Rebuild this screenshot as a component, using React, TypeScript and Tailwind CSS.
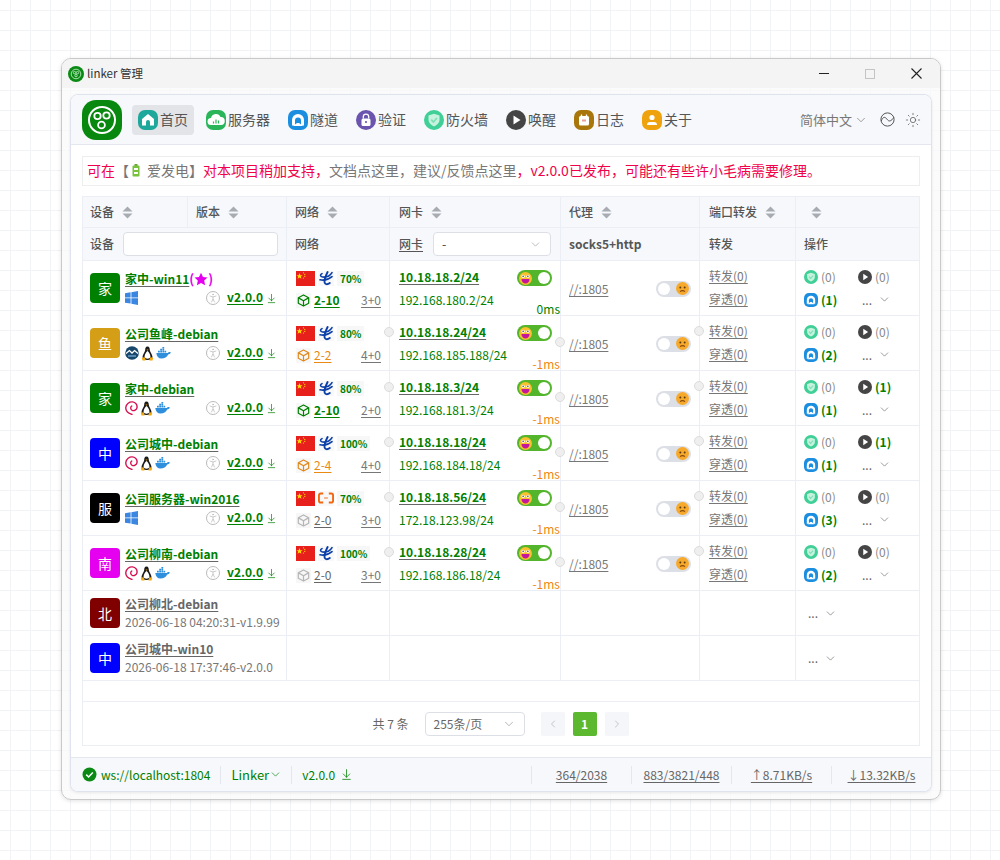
import type { ReactNode } from "react";
import { ArrowDownToLine, ChevronDown, ChevronLeft, ChevronRight, PersonStanding, Sun } from "lucide-react";

const gridCols = "grid grid-cols-[204px_103px_171px_139px_96px_125px]";
const cellBorder = "border-r border-[#ebeef5] last:border-r-0";

function Squircle({ color, size = 20, children }: { color: string; size?: number; children: ReactNode }) {
  return (
    <svg width={size} height={size} viewBox="0 0 20 20" className="shrink-0">
      <rect width="20" height="20" rx="7" fill={color} />
      {children}
    </svg>
  );
}

const HomeIcon = () => (
  <Squircle color="#1ea89b">
    <path d="M10 4 L16 9 V15.5 H12 V12 A2 2 0 0 0 8 12 V15.5 H4 V9 Z" fill="#fff" />
  </Squircle>
);
const ServerIcon = () => (
  <Squircle color="#2bb55a">
    <path d="M5 15 a3.5 3.5 0 0 1 0-7 a5 5 0 0 1 9.5-1 a4 4 0 0 1 .5 8 Z" fill="#fff" />
    <path d="M7.5 13.5v-2M10 13.5v-4M12.5 13.5v-3" stroke="#2bb55a" strokeWidth="1.2" />
  </Squircle>
);
const TunnelIcon = ({ size = 20 }: { size?: number }) => (
  <Squircle color="#1b8ee0" size={size}>
    <path d="M4 15.5 V10 a6 6 0 0 1 12 0 V15.5 Z" fill="#fff" />
    <path d="M7 15.5 V10.5 a3 3 0 0 1 6 0 V15.5 Z" fill="#1b8ee0" />
    <path d="M9 13 L5 16 H15 L11 13 Z" fill="#fff" />
  </Squircle>
);
const LockIcon = () => (
  <svg width="20" height="20" viewBox="0 0 20 20" className="shrink-0">
    <circle cx="10" cy="10" r="10" fill="#6a54ad" />
    <rect x="5.5" y="8.5" width="9" height="7.5" rx="1.5" fill="#fff" />
    <path d="M7.3 8.5 V6.8 a2.7 2.7 0 0 1 5.4 0 V8.5" fill="none" stroke="#fff" strokeWidth="1.3" />
    <circle cx="10" cy="12" r="1.1" fill="#6a54ad" />
  </svg>
);
const ShieldIcon = ({ size = 20 }: { size?: number }) => (
  <svg width={size} height={size} viewBox="0 0 20 20" className="shrink-0">
    <circle cx="10" cy="10" r="10" fill="#3fcf97" />
    <path d="M10 3.8 L15.5 5.6 V10 C15.5 13 13 15.2 10 16.4 C7 15.2 4.5 13 4.5 10 V5.6 Z" fill="#c6f2de" />
    <path d="M7.2 9.6 L9.4 12 L13 8" fill="none" stroke="#7fe0b8" strokeWidth="1.6" />
  </svg>
);
const PlayIcon = ({ size = 20 }: { size?: number }) => (
  <svg width={size} height={size} viewBox="0 0 20 20" className="shrink-0">
    <circle cx="10" cy="10" r="10" fill="#454545" />
    <path d="M7.5 5.5 L14.5 10 L7.5 14.5 Z" fill="#fff" />
  </svg>
);
const LogIcon = () => (
  <Squircle color="#a8760a">
    <rect x="5" y="6" width="10" height="9.5" rx="1.5" fill="#fff" />
    <path d="M7.5 6 V4.5M12.5 6 V4.5" stroke="#fff" strokeWidth="1.4" />
    <rect x="8" y="9.5" width="4" height="2" fill="#e8a0a0" />
  </Squircle>
);
const AboutIcon = () => (
  <Squircle color="#eea30e">
    <circle cx="10" cy="7.5" r="2.6" fill="#fff" />
    <path d="M5 15 a3 3 0 0 1 3-3 h4 a3 3 0 0 1 3 3 Z" fill="#fff" />
  </Squircle>
);

const LinkerMark = ({ size }: { size: number }) => (
  <svg width={size} height={size} viewBox="0 0 40 40" className="shrink-0">
    <rect width="40" height="40" rx="14" fill="#08880f" />
    <circle cx="20" cy="20" r="13" fill="none" stroke="#fff" strokeWidth="2" />
    <circle cx="15.5" cy="16" r="3.2" fill="none" stroke="#fff" strokeWidth="1.8" />
    <circle cx="24.5" cy="15.5" r="3.2" fill="none" stroke="#fff" strokeWidth="1.8" />
    <circle cx="19.5" cy="25" r="3.4" fill="none" stroke="#fff" strokeWidth="1.8" />
  </svg>
);

const TitleMark = () => (
  <svg width="16" height="16" viewBox="0 0 16 16" className="shrink-0">
    <circle cx="8" cy="8" r="8" fill="#0a8a14" />
    <circle cx="8" cy="8" r="4.8" fill="none" stroke="#a8e0ad" strokeWidth="1" />
    <circle cx="6.5" cy="6.6" r="1.2" fill="none" stroke="#c8efcb" strokeWidth=".8" />
    <circle cx="9.5" cy="6.6" r="1.2" fill="none" stroke="#c8efcb" strokeWidth=".8" />
    <circle cx="8" cy="9.6" r="1.2" fill="none" stroke="#c8efcb" strokeWidth=".8" />
  </svg>
);

const SortCaret = () => (
  <svg width="11" height="13" viewBox="0 0 11 13" className="shrink-0">
    <path d="M5.5 0.5 L10.5 5.5 H0.5 Z" fill="#a8abb2" />
    <path d="M5.5 12.5 L10.5 7.5 H0.5 Z" fill="#a8abb2" />
  </svg>
);

const Flag = () => (
  <svg width="19" height="15" viewBox="0 0 19 15" className="shrink-0">
    <rect width="19" height="15" fill="#e8201c" />
    <path d="M3.5 2 L4.3 4.2 L6.5 4.2 L4.8 5.6 L5.4 7.7 L3.5 6.5 L1.6 7.7 L2.2 5.6 L.5 4.2 L2.7 4.2 Z" fill="#ffde00" />
    <circle cx="7.5" cy="1.8" r=".6" fill="#ffde00" />
    <circle cx="8.8" cy="3.4" r=".6" fill="#ffde00" />
    <circle cx="8.8" cy="5.4" r=".6" fill="#ffde00" />
    <circle cx="7.5" cy="7" r=".6" fill="#ffde00" />
  </svg>
);

const TelecomLogo = () => (
  <svg width="14" height="15" viewBox="0 0 14 15">
    <path d="M3 2.6 C1 3.6 1 5.6 3.6 6 C7 6.4 11 5 13 1.6 M1 8.8 C5 9.6 9.5 8.6 13 5.6" fill="none" stroke="#0b3fa8" strokeWidth="1.6" strokeLinecap="round" />
    <path d="M8.6 1 C6.4 5.4 4.8 9.5 5.8 12 C6.4 13.6 8.8 13.6 10.8 12" fill="none" stroke="#0b3fa8" strokeWidth="1.9" strokeLinecap="round" />
  </svg>
);

const AliyunLogo = () => (
  <svg width="17" height="12" viewBox="0 0 17 12">
    <path d="M5.5 1.2 H3 A2 2 0 0 0 1 3.2 V8.8 A2 2 0 0 0 3 10.8 H5.5 M11.5 1.2 H14 A2 2 0 0 1 16 3.2 V8.8 A2 2 0 0 1 14 10.8 H11.5" fill="none" stroke="#f2660f" strokeWidth="2" />
    <path d="M6.5 6 H10.5" stroke="#f2660f" strokeWidth="1" />
  </svg>
);

const BoxIcon = ({ color }: { color: string }) => (
  <span className="flex h-[15px] w-[15px] items-center justify-center bg-[#f7f7f7]">
    <svg width="13" height="13" viewBox="0 0 14 14">
      <path d="M7 1 L12.6 4 V10 L7 13 L1.4 10 V4 Z M1.6 4.2 L7 7.2 L12.4 4.2 M7 7.2 V13" fill="none" stroke={color} strokeWidth="1.3" strokeLinejoin="round" />
    </svg>
  </span>
);

const WindowsIcon = () => (
  <svg width="13" height="14" viewBox="0 0 13 14" className="shrink-0">
    <path d="M0 2.2 L5.6 1.3 V6.5 H0 Z M6.4 1.2 L13 0 V6.5 H6.4 Z M0 7.3 H5.6 V12.6 L0 11.8 Z M6.4 7.3 H13 V14 L6.4 12.8 Z" fill="#3a86e0" />
  </svg>
);
const DeepinIcon = () => (
  <svg width="14" height="14" viewBox="0 0 14 14" className="shrink-0">
    <circle cx="7" cy="7" r="6.8" fill="#17476b" />
    <path d="M1 7.4 L4.4 4.6 L7 7 L9.6 4.6 L13 7.4" fill="none" stroke="#fff" strokeWidth="1.3" />
    <path d="M3 10 H11" stroke="#7fb6de" strokeWidth="1.2" />
  </svg>
);
const DebianIcon = () => (
  <svg width="13" height="14" viewBox="0 0 13 14" className="shrink-0">
    <path d="M7 13.4 C3 12.4 .6 9.5 .8 6.5 C1.1 2.8 4.5 .6 7.5 .9 C10.8 1.2 12.4 4 12 6.6 C11.6 9 9 10.2 7.2 9.4 C5.4 8.5 5.2 6 6.8 5" fill="none" stroke="#d4114f" strokeWidth="1.4" strokeLinecap="round" />
  </svg>
);
const TuxIcon = () => (
  <svg width="13" height="15" viewBox="0 0 13 15" className="shrink-0">
    <path d="M6.5 .5 C4.5 .5 4.2 2.5 4.2 4 C4.2 6 1.5 8.5 1.5 11 C1.5 13 4 14 6.5 14 C9 14 11.5 13 11.5 11 C11.5 8.5 8.8 6 8.8 4 C8.8 2.5 8.5 .5 6.5 .5 Z" fill="#1a1a1a" />
    <path d="M6.5 5 C5 6 3.6 8.6 3.6 10.6 C3.6 12 5 12.8 6.5 12.8 C8 12.8 9.4 12 9.4 10.6 C9.4 8.6 8 6 6.5 5 Z" fill="#fff" />
    <path d="M.8 12 L3.6 11 L4.6 14.5 L1.5 14.5 Z M12.2 12 L9.4 11 L8.4 14.5 L11.5 14.5 Z M5.5 3.6 H7.5 L6.5 4.8 Z" fill="#f4a80d" />
  </svg>
);
const DockerIcon = () => (
  <svg width="15" height="12" viewBox="0 0 15 12" className="shrink-0">
    <path d="M.3 6 H11.8 C12.4 5 13.4 4.8 14.8 5.4 C14.2 6.8 13.2 7.3 12.2 7.4 C11 10 8.5 11.5 5.5 11.5 C2.5 11.5 .6 9.5 .3 6 Z" fill="#2f8fdc" />
    <path d="M2 3.8 H3.8 V5.4 H2 Z M4.2 3.8 H6 V5.4 H4.2 Z M6.4 3.8 H8.2 V5.4 H6.4 Z M4.2 1.8 H6 V3.4 H4.2 Z M6.4 1.8 H8.2 V3.4 H6.4 Z M6.4 0 H8.2 V1.4 H6.4 Z M8.6 3.8 H10.2 V5.4 H8.6 Z" fill="#2f8fdc" />
  </svg>
);

const HappyFace = () => (
  <svg width="13" height="13" viewBox="0 0 12 12">
    <circle cx="6" cy="6" r="6" fill="#f7c02c" />
    <circle cx="3.8" cy="4" r="1.5" fill="#fff" />
    <circle cx="8.2" cy="4" r="1.5" fill="#fff" />
    <circle cx="3.8" cy="4" r=".7" fill="#333" />
    <circle cx="8.2" cy="4" r=".7" fill="#333" />
    <path d="M2.3 6.4 H9.7 C9.7 9 8 10.6 6 10.6 C4 10.6 2.3 9 2.3 6.4 Z" fill="#c4169c" />
  </svg>
);
const SadFace = () => (
  <svg width="13" height="13" viewBox="0 0 12 12">
    <circle cx="6" cy="6" r="6" fill="#f6a92b" />
    <circle cx="4" cy="5" r=".9" fill="#5a3a10" />
    <circle cx="8" cy="5" r=".9" fill="#5a3a10" />
    <path d="M3.8 9 C4.8 7.6 7.2 7.6 8.2 9" fill="none" stroke="#8a4a10" strokeWidth="1" />
  </svg>
);

const SwitchOn = () => (
  <span className="flex h-4 w-[35px] items-center justify-between rounded-full bg-[#52b52b] px-[2px]">
    <HappyFace />
    <span className="h-3 w-3 rounded-full bg-white" />
  </span>
);
const SwitchOff = () => (
  <span className="flex h-4 w-[35px] items-center justify-between rounded-full bg-[#dcdfe6] px-[2px]">
    <span className="h-3 w-3 rounded-full bg-white" />
    <SadFace />
  </span>
);

const Handle = ({ className }: { className: string }) => (
  <span className={`absolute h-[10px] w-[10px] rounded-full border border-[#dcdcdc] bg-[#efefef] ${className}`} />
);

const navItems = [
  { label: "首页", icon: <HomeIcon />, active: true },
  { label: "服务器", icon: <ServerIcon /> },
  { label: "隧道", icon: <TunnelIcon /> },
  { label: "验证", icon: <LockIcon /> },
  { label: "防火墙", icon: <ShieldIcon /> },
  { label: "唤醒", icon: <PlayIcon /> },
  { label: "日志", icon: <LogIcon /> },
  { label: "关于", icon: <AboutIcon /> },
];

type Device = {
  avatar: string;
  avatarBg: string;
  name: string;
  os: "win" | "deepin" | "debian";
  star?: boolean;
  carrier?: "telecom" | "ali";
  pct: number;
  route: string;
  routeColor: string;
  boxColor: string;
  hops: string;
  ip: string;
  lan: string;
  latency: string;
  latencyColor: string;
  wake: number;
  tunnel: number;
  handles?: boolean;
};

const devices: Device[] = [
  { avatar: "家", avatarBg: "bg-[#008000]", name: "家中-win11", os: "win", star: true, carrier: "telecom", pct: 70, route: "2-10", routeColor: "text-[#008000] font-semibold decoration-[#008000]", boxColor: "#008000", hops: "3+0", ip: "10.18.18.2/24", lan: "192.168.180.2/24", latency: "0ms", latencyColor: "text-[#008000]", wake: 0, tunnel: 1 },
  { avatar: "鱼", avatarBg: "bg-[#d49f17]", name: "公司鱼峰-debian", os: "deepin", carrier: "telecom", pct: 80, route: "2-2", routeColor: "text-[#e88a14] decoration-[#e88a14]", boxColor: "#e08a1e", hops: "4+0", ip: "10.18.18.24/24", lan: "192.168.185.188/24", latency: "-1ms", latencyColor: "text-[#ed8a10]", wake: 0, tunnel: 2, handles: true },
  { avatar: "家", avatarBg: "bg-[#008000]", name: "家中-debian", os: "debian", carrier: "telecom", pct: 80, route: "2-10", routeColor: "text-[#008000] font-semibold decoration-[#008000]", boxColor: "#008000", hops: "2+0", ip: "10.18.18.3/24", lan: "192.168.181.3/24", latency: "-1ms", latencyColor: "text-[#ed8a10]", wake: 1, tunnel: 1, handles: true },
  { avatar: "中", avatarBg: "bg-[#0000ff]", name: "公司城中-debian", os: "debian", carrier: "telecom", pct: 100, route: "2-4", routeColor: "text-[#e88a14] decoration-[#e88a14]", boxColor: "#e08a1e", hops: "4+0", ip: "10.18.18.18/24", lan: "192.168.184.18/24", latency: "-1ms", latencyColor: "text-[#ed8a10]", wake: 1, tunnel: 1, handles: true },
  { avatar: "服", avatarBg: "bg-black", name: "公司服务器-win2016", os: "win", carrier: "ali", pct: 70, route: "2-0", routeColor: "text-[#666] decoration-[#666]", boxColor: "#b5b5b5", hops: "3+0", ip: "10.18.18.56/24", lan: "172.18.123.98/24", latency: "-1ms", latencyColor: "text-[#ed8a10]", wake: 0, tunnel: 3, handles: true },
  { avatar: "南", avatarBg: "bg-[#e600f0]", name: "公司柳南-debian", os: "debian", carrier: "telecom", pct: 100, route: "2-0", routeColor: "text-[#666] decoration-[#666]", boxColor: "#b5b5b5", hops: "3+0", ip: "10.18.18.28/24", lan: "192.168.186.18/24", latency: "-1ms", latencyColor: "text-[#ed8a10]", wake: 0, tunnel: 2, handles: true },
];

const offline = [
  { avatar: "北", avatarBg: "bg-[#800000]", name: "公司柳北-debian", seen: "2026-06-18 04:20:31-v1.9.99" },
  { avatar: "中", avatarBg: "bg-[#0000ff]", name: "公司城中-win10", seen: "2026-06-18 17:37:46-v2.0.0" },
];

const Avatar = ({ text, bg }: { text: string; bg: string }) => (
  <span className={`flex h-[30px] w-[30px] shrink-0 items-center justify-center rounded-[4px] text-[14px] text-white ${bg}`}>{text}</span>
);

const Count = ({ n }: { n: number }) =>
  n > 0 ? <span className="font-semibold text-[#008000]">({n})</span> : <span className="text-[#888]">(0)</span>;

function OnlineRow({ d }: { d: Device }) {
  return (
    <div className={`h-[55px] border-b border-[#ebeef5] ${gridCols}`}>
      <div className={`flex gap-[5px] pl-[7px] pr-[9px] pt-[12px] ${cellBorder}`}>
        <Avatar text={d.avatar} bg={d.avatarBg} />
        <div className="-mt-[1px] min-w-0 flex-1">
          <div className="flex h-[14px] items-center text-[12px] font-semibold leading-[14px] text-[#008000]">
            <span className="underline decoration-[#666] underline-offset-2">{d.name}</span>
            {d.star && (
              <span className="flex items-center text-[13px] text-[#e600f0]">
                (
                <svg width="14" height="14" viewBox="0 0 14 14">
                  <path d="M7 .8 L9 5 L13.5 5.5 L10.2 8.6 L11.1 13.2 L7 10.9 L2.9 13.2 L3.8 8.6 L.5 5.5 L5 5 Z" fill="#e600f0" />
                </svg>
                )
              </span>
            )}
          </div>
          <div className="mt-[2px] flex h-[20px] items-center">
            <span className="flex items-center gap-[2px]">
              {d.os === "win" ? <WindowsIcon /> : d.os === "deepin" ? <DeepinIcon /> : <DebianIcon />}
              {d.os !== "win" && <TuxIcon />}
              {d.os !== "win" && <DockerIcon />}
            </span>
            <span className="ml-auto flex h-[14px] w-[14px] items-center justify-center rounded-full border border-[#bbb] text-[#bbb]">
              <PersonStanding size={12} strokeWidth={1.5} />
            </span>
            <span className="mb-[2px] ml-[7px] text-[12px] font-semibold text-[#008000] underline underline-offset-2">v2.0.0</span>
            <ArrowDownToLine size={11} strokeWidth={1.5} className="ml-[3px] text-[#008000]" />
          </div>
        </div>
      </div>

      <div className={`relative pl-[9px] pr-[8px] pt-[9px] ${cellBorder}`}>
        <div className="flex h-[16px] items-center gap-[3px]">
          <Flag />
          <span className="flex h-[15px] w-[16px] items-center justify-center bg-[#f8f8f8]">
            {d.carrier === "ali" ? <AliyunLogo /> : <TelecomLogo />}
          </span>
          <span className="flex h-[15px] items-center bg-[#f7f7f7] px-[3px] text-[10px] font-semibold text-[#008000]">{d.pct}%</span>
        </div>
        <div className="mt-[6px] flex h-[16px] items-center text-[12px]">
          <BoxIcon color={d.boxColor} />
          <span className={`ml-[3px] underline underline-offset-2 ${d.routeColor}`}>{d.route}</span>
          <span className="ml-auto text-[#777] underline underline-offset-2">{d.hops}</span>
        </div>
        {d.handles && <Handle className="-right-[5px] top-[11px]" />}
      </div>

      <div className={`relative pl-[9px] pr-[8px] pt-[8px] ${cellBorder}`}>
        <div className="flex h-[18px] items-center">
          <span className="mb-[2px] text-[12px] font-semibold text-[#008000] underline decoration-[#666] underline-offset-2">{d.ip}</span>
          <span className="ml-auto">
            <SwitchOn />
          </span>
        </div>
        <div className="mt-[4px] h-[18px] text-[12px] leading-[18px] text-[#008000]">{d.lan}</div>
        <span className={`absolute bottom-[-3px] right-0 text-[12px] leading-[18px] ${d.latencyColor}`}>{d.latency}</span>
        {d.handles && <Handle className="-right-[5px] top-[21px]" />}
      </div>

      <div className={`relative flex items-center pl-[8px] pr-[8px] pt-[1px] ${cellBorder}`}>
        <span className="text-[12px] text-[#777] underline underline-offset-2">//:1805</span>
        <span className="ml-auto">
          <SwitchOff />
        </span>
        {d.handles && <Handle className="-right-[5px] top-[10px]" />}
      </div>

      <div className={`flex flex-col pl-[9px] pt-[3px] text-[12px] leading-[23px] text-[#777] ${cellBorder}`}>
        <span className="underline underline-offset-2">转发(0)</span>
        <span className="underline underline-offset-2">穿透(0)</span>
      </div>

      <div className="pl-[8px] pt-[4px] text-[12px]">
        <div className="flex h-[23px] items-center">
          <span className="flex w-[54px] items-center gap-[3px]">
            <ShieldIcon size={14} />
            <Count n={0} />
          </span>
          <span className="flex items-center gap-[3px]">
            <PlayIcon size={14} />
            <Count n={d.wake} />
          </span>
        </div>
        <div className="flex h-[23px] items-center">
          <span className="flex w-[58px] items-center gap-[3px]">
            <TunnelIcon size={14} />
            <Count n={d.tunnel} />
          </span>
          <span className="flex items-center gap-[6px] text-[#666]">
            ...
            <ChevronDown size={13} strokeWidth={1.2} />
          </span>
        </div>
      </div>
    </div>
  );
}

function OfflineRow({ avatar, avatarBg, name, seen }: (typeof offline)[number]) {
  return (
    <div className={`h-[45px] border-b border-[#ebeef5] ${gridCols}`}>
      <div className={`flex items-center gap-[5px] pl-[7px] ${cellBorder}`}>
        <Avatar text={avatar} bg={avatarBg} />
        <div className="text-[12px] leading-[18px] text-[#777]">
          <div className="font-semibold text-[#666] underline underline-offset-2">{name}</div>
          <div>{seen}</div>
        </div>
      </div>
      <div className={cellBorder} />
      <div className={cellBorder} />
      <div className={cellBorder} />
      <div className={cellBorder} />
      <div className="flex items-center gap-[6px] pl-[12px] text-[12px] text-[#666]">
        ...
        <ChevronDown size={13} strokeWidth={1.2} />
      </div>
    </div>
  );
}

const HeaderLabel = ({ text }: { text?: string }) => (
  <span className="flex items-center gap-[8px]">
    {text}
    <SortCaret />
  </span>
);

const Sep = () => <span className="block h-[18px] w-px bg-[#e4e7ed]" />;

const StatLink = ({ children }: { children: ReactNode }) => (
  <>
    <Sep />
    <span className="flex w-[99px] justify-center text-[12px] text-[#666] underline underline-offset-2">{children}</span>
  </>
);

export default function App() {
  return (
    <div className="h-[860px] w-[1000px] overflow-hidden bg-white bg-[linear-gradient(#f1f3f7_1px,transparent_1px),linear-gradient(90deg,#f1f3f7_1px,transparent_1px)] bg-[size:20px_20px] bg-[position:10px_10px] pl-[61px] pt-[58px] font-['Noto_Sans_CJK_SC',sans-serif] text-[#555]">
      <div className="flex h-[742px] w-[880px] flex-col overflow-hidden rounded-[10px] border border-[#c9c9c9] bg-[#fafafa]/70 shadow-[0_1px_4px_rgba(0,0,0,0.12)]">
        {/* title bar */}
        <div className="flex h-[29px] shrink-0 items-center bg-[#f4f4f4] pl-[6px]">
          <TitleMark />
          <span className="ml-[3px] text-[11.5px] text-[#333]">linker 管理</span>
          <div className="ml-auto flex items-center">
            <span className="h-[1.5px] w-[10px] bg-[#222]" />
            <span className="ml-[36px] h-[10px] w-[10px] border border-[#c4c4c4]" />
            <svg width="11" height="11" viewBox="0 0 11 11" className="ml-[36px] mr-[18px]">
              <path d="M.5 .5 L10.5 10.5 M10.5 .5 L.5 10.5" stroke="#222" strokeWidth="1.1" />
            </svg>
          </div>
        </div>

        {/* app panel */}
        <div className="ml-[8px] mt-[6px] flex h-[698px] w-[862px] flex-col overflow-hidden rounded-[8px] border border-[#dfe3ee] bg-white shadow-[0_1px_3px_rgba(0,0,0,0.08)]">
          <header className="flex h-[50px] shrink-0 items-center border-b border-[#e4e7ef] bg-[#f6f8fb] pl-[11px] pr-[10px]">
            <LinkerMark size={40} />
            <nav className="ml-[10px] flex items-center gap-[6px]">
              {navItems.map((item) => (
                <span
                  key={item.label}
                  className={`flex h-[30px] items-center gap-[2px] rounded-[4px] px-[6px] text-[14px] text-[#555] ${item.active ? "bg-[#e2e4e8]" : ""}`}
                >
                  {item.icon}
                  {item.label}
                </span>
              ))}
            </nav>
            <div className="ml-auto flex items-center text-[#777]">
              <span className="text-[13px]">简体中文</span>
              <ChevronDown size={14} strokeWidth={1.2} className="ml-[2px]" />
              <svg width="15" height="15" viewBox="0 0 15 15" className="ml-[12px]">
                <circle cx="7.5" cy="7.5" r="6.6" fill="none" stroke="#555" strokeWidth="1" />
                <path d="M1.2 9 C3 4.5 5 4.5 7 7.2 C9 10 11 9.5 13.8 5.5" fill="none" stroke="#555" strokeWidth="1" />
              </svg>
              <Sun size={16} strokeWidth={1.1} className="ml-[10px] text-[#555]" />
            </div>
          </header>

          <main className="flex-1 px-[11px] pt-[11px]">
            <div className="flex h-[30px] items-center border border-[#eeeeee] pb-[1px] pl-[4px] text-[14px] text-[#f0024b]">
              <span>可在</span>
              <span className="text-[#777]">【</span>
              <svg width="8" height="13" viewBox="0 0 8 13" className="mx-[3px]">
                <rect x="2.5" y="0" width="3" height="2" fill="#6aa13a" />
                <rect x="0.5" y="1.5" width="7" height="11" rx="1" fill="#78c23c" />
                <rect x="2" y="4" width="4" height="2" fill="#fff" />
                <rect x="2" y="8" width="4" height="2" fill="#fff" />
              </svg>
              <span className="ml-[4px] text-[#777]">爱发电】</span>
              <span>对本项目稍加支持，</span>
              <span className="text-[#777]">文档点这里，建议/反馈点这里</span>
              <span>，v2.0.0已发布，可能还有些许小毛病需要修理。</span>
            </div>

            <div className="mt-[10px] h-[550px] border border-[#ebeef5] text-[12px]">
              {/* table head */}
              <div className={`h-[31px] border-b border-[#ebeef5] bg-[#f6f8fb] font-medium text-[#555] ${gridCols}`}>
                <div className={`flex ${cellBorder}`}>
                  <div className="flex w-[105px] items-center border-r border-[#ebeef5] pl-[7px]">
                    <HeaderLabel text="设备" />
                  </div>
                  <div className="flex items-center pl-2">
                    <HeaderLabel text="版本" />
                  </div>
                </div>
                <div className={`flex items-center pl-2 ${cellBorder}`}>
                  <HeaderLabel text="网络" />
                </div>
                <div className={`flex items-center pl-[9px] ${cellBorder}`}>
                  <HeaderLabel text="网卡" />
                </div>
                <div className={`flex items-center pl-2 ${cellBorder}`}>
                  <HeaderLabel text="代理" />
                </div>
                <div className={`flex items-center pl-[9px] ${cellBorder}`}>
                  <HeaderLabel text="端口转发" />
                </div>
                <div className="flex items-center pl-[15px]">
                  <SortCaret />
                </div>
              </div>
              <div className={`h-[33px] border-b border-[#ebeef5] bg-[#f6f8fb] font-medium text-[#555] ${gridCols}`}>
                <div className={`flex items-center pl-[7px] pr-2 ${cellBorder}`}>
                  设备
                  <span className="ml-[9px] h-[24px] w-[155px] rounded-[4px] border border-[#dcdfe6] bg-white" />
                </div>
                <div className={`flex items-center pl-2 ${cellBorder}`}>网络</div>
                <div className={`flex items-center pl-[9px] pr-[9px] ${cellBorder}`}>
                  <span className="underline underline-offset-2">网卡</span>
                  <span className="ml-[10px] flex h-[24px] flex-1 items-center rounded-[4px] border border-[#dcdfe6] bg-white pl-[8px] pr-[8px]">
                    -
                    <ChevronDown size={13} strokeWidth={1.2} className="ml-auto text-[#999]" />
                  </span>
                </div>
                <div className={`flex items-center pl-2 font-semibold ${cellBorder}`}>socks5+http</div>
                <div className={`flex items-center pl-[9px] ${cellBorder}`}>转发</div>
                <div className="flex items-center pl-2">操作</div>
              </div>

              {devices.map((d) => (
                <OnlineRow key={d.ip} d={d} />
              ))}
              {offline.map((d) => (
                <OfflineRow key={d.name} {...d} />
              ))}

              <div className="h-[21px] border-b border-[#ebeef5]" />

              {/* pagination */}
              <div className="flex h-[44px] items-center justify-center pr-[1px] text-[12px] text-[#666]">
                <span>共 7 条</span>
                <span className="ml-[16px] flex h-[24px] w-[100px] items-center rounded-[4px] border border-[#dcdfe6] pl-[8px] pr-[8px]">
                  255条/页
                  <ChevronDown size={14} strokeWidth={1.2} className="ml-auto text-[#999]" />
                </span>
                <span className="ml-[16px] flex h-[24px] w-[24px] items-center justify-center rounded-[2px] bg-[#f4f6f9] text-[#b0b3b8]">
                  <ChevronLeft size={12} strokeWidth={1.5} />
                </span>
                <span className="ml-[8px] flex h-[24px] w-[24px] items-center justify-center rounded-[2px] bg-[#5cb82e] font-semibold text-white">1</span>
                <span className="ml-[8px] flex h-[24px] w-[24px] items-center justify-center rounded-[2px] bg-[#f4f6f9] text-[#b0b3b8]">
                  <ChevronRight size={12} strokeWidth={1.5} />
                </span>
              </div>
            </div>
          </main>

          <footer className="flex h-[34px] shrink-0 items-center border-t border-[#e4e7ef] bg-[#f6f8fb] pl-[11px] text-[12px] text-[#008000]">
            <svg width="15" height="15" viewBox="0 0 15 15">
              <circle cx="7.5" cy="7.5" r="7" fill="#0a8a14" />
              <path d="M4.2 7.6 L6.6 10 L10.8 5.4" fill="none" stroke="#fff" strokeWidth="1.5" />
            </svg>
            <span className="ml-[4px]">ws://localhost:1804</span>
            <span className="ml-[10px]">
              <Sep />
            </span>
            <span className="ml-[10px] flex items-center text-[13px]">
              Linker
              <ChevronDown size={13} strokeWidth={1.2} />
            </span>
            <span className="ml-[9px]">
              <Sep />
            </span>
            <span className="ml-[10px]">v2.0.0</span>
            <ArrowDownToLine size={13} strokeWidth={1.4} className="ml-[5px]" />
            <span className="ml-auto flex items-center">
              <StatLink>364/2038</StatLink>
              <StatLink>883/3821/448</StatLink>
              <StatLink>↑8.71KB/s</StatLink>
              <StatLink>↓13.32KB/s</StatLink>
            </span>
          </footer>
        </div>
      </div>
    </div>
  );
}
